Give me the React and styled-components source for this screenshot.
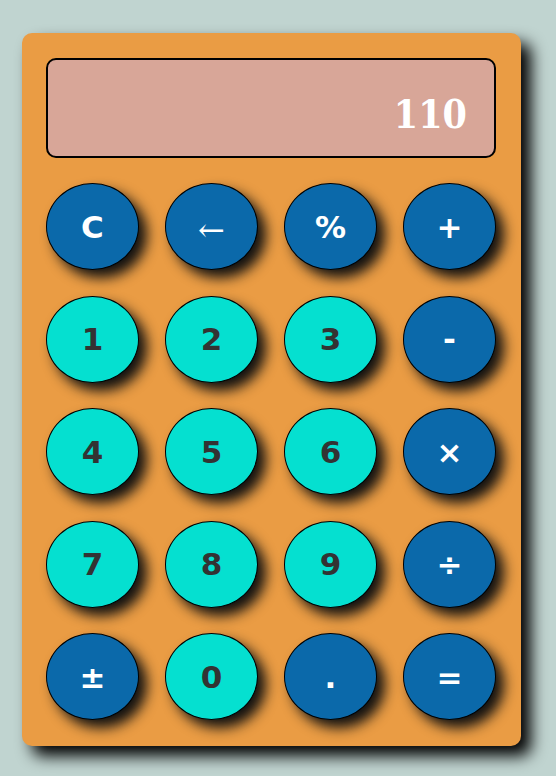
import React from 'react'
import styled, { createGlobalStyle } from 'styled-components'

const GlobalStyle = createGlobalStyle`
  html, body {
    margin: 0;
    padding: 0;
    background: #c0d4d0;
  }
`

const Page = styled.div`
  width: 556px;
  height: 776px;
  padding: 33px 0 0 22px;
  box-sizing: border-box;
`

const Calculator = styled.div`
  width: 499px;
  box-sizing: border-box;
  padding: 25px 25px 26px 24px;
  background: #ea9c44;
  border-radius: 10px;
  box-shadow: 10px 10px 16px #000;
  display: flex;
  flex-direction: column;
  gap: 25px;
`

const Display = styled.div`
  height: 100px;
  box-sizing: border-box;
  border: 2px solid #000;
  border-radius: 10px;
  background: #d8a698;
  display: flex;
  align-items: center;
  justify-content: flex-end;
  padding: 11px 27px 0 0;
  color: #fff;
  font-family: 'DejaVu Serif Condensed', 'DejaVu Serif', serif;
  font-weight: bold;
  font-size: 39px;
`

const Keys = styled.div`
  display: grid;
  grid-template-columns: repeat(4, 93px);
  grid-auto-rows: 87px;
  column-gap: 26px;
  row-gap: 25.5px;
`

const Key = styled.button`
  border: 1px solid #000;
  border-radius: 50%;
  margin: 0;
  padding: 0;
  background: ${p => (p.$digit ? '#05e0d0' : '#0b69aa')};
  color: ${p => (p.$digit ? '#333' : '#fff')};
  box-shadow: 8px 8px 13px #111;
  font-family: 'DejaVu Sans', Verdana, sans-serif;
  font-weight: bold;
  font-size: 31px;
  display: flex;
  align-items: center;
  justify-content: center;
  cursor: pointer;
`

const Arrow = styled.span`
  font-family: 'DejaVu Serif', serif;
  font-weight: normal;
  font-size: 32px;
  position: relative;
  top: 3px;
`

const keys = [
  ['C'], ['←'], ['%'], ['+'],
  ['1', true], ['2', true], ['3', true], ['-'],
  ['4', true], ['5', true], ['6', true], ['×'],
  ['7', true], ['8', true], ['9', true], ['÷'],
  ['±'], ['0', true], ['.'], ['='],
]

export default function App() {
  return (
    <Page>
      <GlobalStyle />
      <Calculator>
        <Display>110</Display>
        <Keys>
          {keys.map(([label, digit]) => (
            <Key key={label} $digit={digit}>
              {label === '←' ? <Arrow>{label}</Arrow> : label}
            </Key>
          ))}
        </Keys>
      </Calculator>
    </Page>
  )
}
